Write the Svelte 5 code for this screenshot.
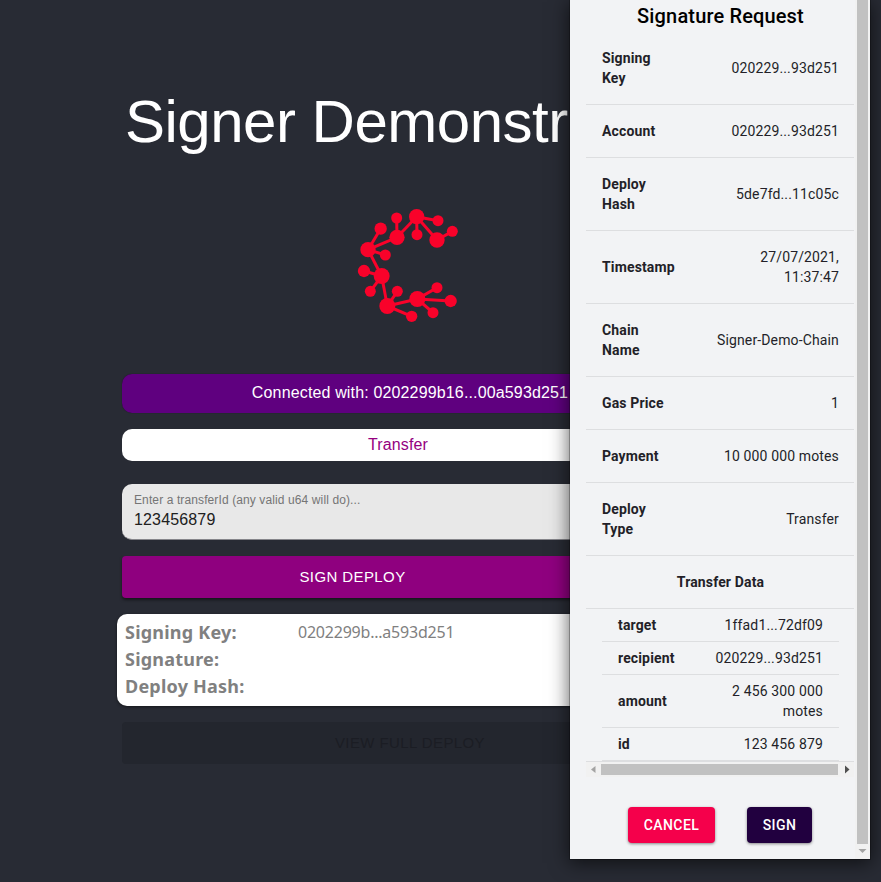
<script>
  const rows = [
    { label: ['Signing', 'Key'], value: ['020229...93d251'] },
    { label: ['Account'], value: ['020229...93d251'] },
    { label: ['Deploy', 'Hash'], value: ['5de7fd...11c05c'] },
    { label: ['Timestamp'], value: ['27/07/2021,', '11:37:47'] },
    { label: ['Chain', 'Name'], value: ['Signer-Demo-Chain'] },
    { label: ['Gas Price'], value: ['1'] },
    { label: ['Payment'], value: ['10 000 000 motes'] },
    { label: ['Deploy', 'Type'], value: ['Transfer'] }
  ];
  const transfer = [
    { label: ['target'], value: ['1ffad1...72df09'] },
    { label: ['recipient'], value: ['020229...93d251'] },
    { label: ['amount'], value: ['2 456 300 000', 'motes'] },
    { label: ['id'], value: ['123 456 879'] }
  ];
  const nodes = [
    [230, 65, 23], [171, 127, 23], [291, 135, 23], [84, 164, 23], [125, 243, 24], [142, 333, 24], [232, 312, 24],
    [294, 77, 16.5], [337, 109, 16.5], [231, 119, 16.5], [170, 69, 16.5], [122, 101, 18.5], [136, 180, 16.5],
    [72, 228, 18.5], [91, 289, 16.5], [172, 289, 16.5], [215, 364, 17], [279, 353, 16.5], [291, 278, 16.5], [332, 318, 18.5]
  ];
  const edges = [
    [0, 7], [0, 9], [0, 2], [2, 8], [0, 1], [1, 10], [1, 3], [3, 11], [3, 12], [3, 4],
    [4, 13], [4, 14], [4, 5], [5, 15], [5, 16], [5, 6], [6, 17], [6, 18], [6, 19]
  ];
</script>

{#snippet row(r)}
  <div class="row">
    <div class="key">{#each r.label as l}<div>{l}</div>{/each}</div>
    <div class="val">{#each r.value as l}<div>{l}</div>{/each}</div>
  </div>
{/snippet}

<div class="page">
  <main>
    <h1>Signer Demonstration</h1>
    <svg class="logo" width="140" height="140" viewBox="0 0 420 420">
      {#each edges as [a, b]}
        <line x1={nodes[a][0]} y1={nodes[a][1]} x2={nodes[b][0]} y2={nodes[b][1]} />
      {/each}
      {#each nodes as [x, y, r]}<circle cx={x} cy={y} {r} />{/each}
    </svg>
    <div class="connected">Connected with: 0202299b16...00a593d251</div>
    <div class="select">Transfer</div>
    <div class="field">
      <span class="hint">Enter a transferId (any valid u64 will do)...</span>
      <span class="entry">123456879</span>
    </div>
    <div class="sign-deploy"><span>SIGN DEPLOY</span></div>
    <div class="card">
      <div class="info"><b>Signing Key:</b><span>0202299b...a593d251</span></div>
      <div class="info"><b>Signature:</b></div>
      <div class="info"><b>Deploy Hash:</b></div>
    </div>
    <div class="view">VIEW FULL DEPLOY</div>
  </main>

  <aside>
    <div class="body">
      <h2>Signature Request</h2>
      <div class="scroller">
        {#each rows as r}{@render row(r)}{/each}
        <div class="heading">Transfer Data</div>
        <div class="inner">{#each transfer as r}{@render row(r)}{/each}</div>
      </div>
      <div class="hbar">
        <svg width="15" height="15"><path d="M9.5 4v7L5 7.5z" fill="#a3a3a3" /></svg>
        <i></i>
        <svg width="16" height="15"><path d="M7 3.500v8l4.500-4z" fill="#505050" /></svg>
      </div>
      <div class="actions"><button class="cancel">CANCEL</button><button class="sign">SIGN</button></div>
    </div>
    <div class="vbar">
      <i></i>
      <svg width="15" height="15"><path d="M3.500 5h8l-4 4z" fill="#a3a3a3" /></svg>
    </div>
  </aside>
</div>

<style>
  :global(body) { margin: 0; background: #282b34; }
  .page { position: relative; width: 881px; height: 882px; overflow: hidden; background: #282b34; font-family: "Liberation Sans", Arial, sans-serif; }
  main { box-sizing: border-box; width: 698px; padding: 86px 0 0 122px; display: flex; flex-direction: column; }
  h1 { box-sizing: border-box; margin: 0; width: 447px; height: 72px; padding-left: 3px; overflow: hidden; font-weight: 400; font-size: 60px; line-height: 72px; letter-spacing: -0.5px; color: #fff; white-space: nowrap; }
  .logo { margin: 37px 0 39px 218px; }
  .logo line { stroke: #f9022a; stroke-width: 9; }
  .logo circle { fill: #f9022a; }
  .connected { height: 39px; border-radius: 10px; background: #5f007f; color: #fff; font-size: 16px; line-height: 37px; letter-spacing: 0.15px; text-align: center; box-shadow: 0 0 1px rgba(0,0,0,.5); }
  .select { box-sizing: border-box; margin-top: 16px; height: 32px; padding-right: 24px; border-radius: 10px; background: #fff; color: #95007f; font-size: 16px; line-height: 31px; letter-spacing: 0.15px; text-align: center; }
  .field { box-sizing: border-box; margin-top: 23px; height: 56px; padding: 9px 12px 0; border-radius: 10px; background: #e8e8e8; border-bottom: 1px solid #85858a; display: flex; flex-direction: column; }
  .hint { font-size: 12px; line-height: 14px; letter-spacing: 0.11px; color: #757575; }
  .entry { margin-top: 3px; font-size: 16px; line-height: 20px; letter-spacing: 0.15px; color: #202020; }
  .sign-deploy { margin-top: 16px; width: 461px; height: 42px; border-radius: 4px; background: #8f007f; color: #fff; font-size: 15px; line-height: 42px; letter-spacing: 0.4px; text-align: center; box-shadow: 115px 0 #8f007f, 0 2px 3px rgba(0,0,0,.5); }
  .card { box-sizing: border-box; margin: 16px -5px 0; height: 92px; padding: 5px 8px; border-radius: 10px; background: #fff; box-shadow: 0 1px 3px rgba(0,0,0,.5); color: #808080; }
  .info { height: 27px; display: flex; line-height: 27px; font-family: "Noto Sans", "Open Sans", sans-serif; }
  .info b { width: 173px; font-size: 18px; letter-spacing: 0.22px; }
  .info span { font-size: 16px; letter-spacing: -0.22px; }
  .view { margin-top: 16px; height: 42px; border-radius: 4px; background: #23262e; color: #1b1d24; font-size: 15px; line-height: 42px; letter-spacing: 0.4px; text-align: center; }

  aside { position: absolute; left: 570px; top: 0; width: 300px; height: 859px; display: flex; background: #f2f3f5; box-shadow: 0 0 0 1px rgba(0,0,0,.25), 0 3px 18px 1px rgba(0,0,0,.62); font-family: Roboto, sans-serif; font-size: 14px; line-height: 20px; letter-spacing: 0.14px; color: #231f28; }
  .body { width: 284px; padding-left: 16px; flex: none; box-sizing: border-box; }
  h2 { margin: 0; height: 32px; padding-left: 1px; font-size: 20px; line-height: 32px; font-weight: 500; letter-spacing: 0.15px; text-align: center; color: #000; }
  .scroller { width: 268px; border-bottom: 1px solid #dddee0; }
  .row { display: flex; align-items: center; justify-content: space-between; padding: 16px 15px 16px 16px; border-bottom: 1px solid #dddee0; white-space: nowrap; }
  .key { font-weight: 700; }
  .val { text-align: right; }
  .heading { height: 52px; padding-left: 1px; line-height: 52px; font-weight: 700; text-align: center; border-bottom: 1px solid #dddee0; }
  .inner { margin: 0 15px 0 16px; }
  .inner .row { padding: 6px 16px; }
  .hbar { height: 15px; display: flex; align-items: center; background: #f1f1f1; }
  .hbar i { width: 237px; height: 11px; background: #c1c1c1; }
  .actions { margin-top: 30px; display: flex; gap: 32px; padding-left: 42px; }
  button { height: 36px; border: 0; padding: 0; border-radius: 4px; color: #fff; font: 500 14px/36px Roboto, sans-serif; letter-spacing: 0.4px; box-shadow: 0 1px 3px rgba(0,0,0,.45); }
  .cancel { width: 87px; background: #f5004b; }
  .sign { width: 65px; background: #21003f; }
  .vbar { margin-left: 1px; width: 15px; background: #f1f1f1; display: flex; flex-direction: column; }
  .vbar i { flex: 1; margin: 0 2px; background: #c1c1c1; }
</style>
